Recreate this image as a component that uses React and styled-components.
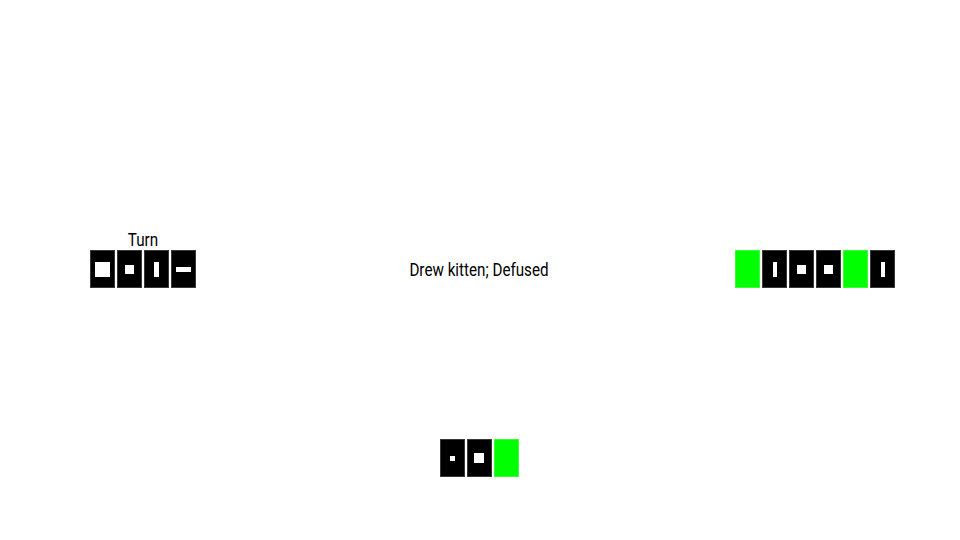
import React from "react";
import styled, { createGlobalStyle } from "styled-components";

const Global = createGlobalStyle`
  html, body { margin: 0; padding: 0; background: #fff; }
  body { font-family: "Roboto", "DejaVu Sans", sans-serif; }
`;

const Table = styled.div`
  width: 960px;
  height: 540px;
  margin: -1px 0 0 -1px;
  display: grid;
  grid-template-columns: 3fr 4fr 3fr;
  grid-template-rows: 3fr 4fr 3fr;
`;

const Cell = styled.div`
  display: flex;
  align-items: center;
  justify-content: center;
  grid-column: ${(p) => p.$col};
  grid-row: ${(p) => p.$row};
`;

const Seat = styled.div`
  position: relative;
  display: flex;
  gap: 2px;
`;

const SeatLabel = styled.div`
  position: absolute;
  left: 0;
  right: 0;
  bottom: 100%;
  margin-bottom: 1px;
  text-align: center;
  font-size: 19px;
  line-height: 19px;
  color: #000;
  transform: scaleX(0.8);
`;

const Card = styled.div`
  box-sizing: border-box;
  width: 25px;
  height: 38px;
  background: ${(p) => (p.$green ? "#00ff00" : "#000")};
  border: 1px solid rgba(255, 255, 255, 0.22);
  display: flex;
  align-items: center;
  justify-content: center;
`;

const Pip = styled.div`
  width: ${(p) => p.$w}px;
  height: ${(p) => p.$h}px;
  background: #fff;
`;

const Status = styled.div`
  font-size: 19px;
  color: #000;
  white-space: nowrap;
  transform: scaleX(0.8);
`;

const renderCards = (cards) =>
  cards.map((c, i) =>
    c === "g" ? (
      <Card key={i} $green />
    ) : (
      <Card key={i}>
        <Pip $w={c[0]} $h={c[1]} />
      </Card>
    )
  );

export default function App() {
  const left = [[15, 15], [9, 9], [5, 15], [15, 5]];
  const right = ["g", [4, 15], [9, 9], [9, 9], "g", [4, 15]];
  const hand = [[5, 5], [10, 10], "g"];
  return (
    <>
      <Global />
      <Table>
        <Cell $col={1} $row={2}>
          <Seat>
            <SeatLabel>Turn</SeatLabel>
            {renderCards(left)}
          </Seat>
        </Cell>
        <Cell $col={2} $row={2}>
          <Status>Drew kitten; Defused</Status>
        </Cell>
        <Cell $col={3} $row={2}>
          <Seat>{renderCards(right)}</Seat>
        </Cell>
        <Cell $col={2} $row={3}>
          <Seat>{renderCards(hand)}</Seat>
        </Cell>
      </Table>
    </>
  );
}
